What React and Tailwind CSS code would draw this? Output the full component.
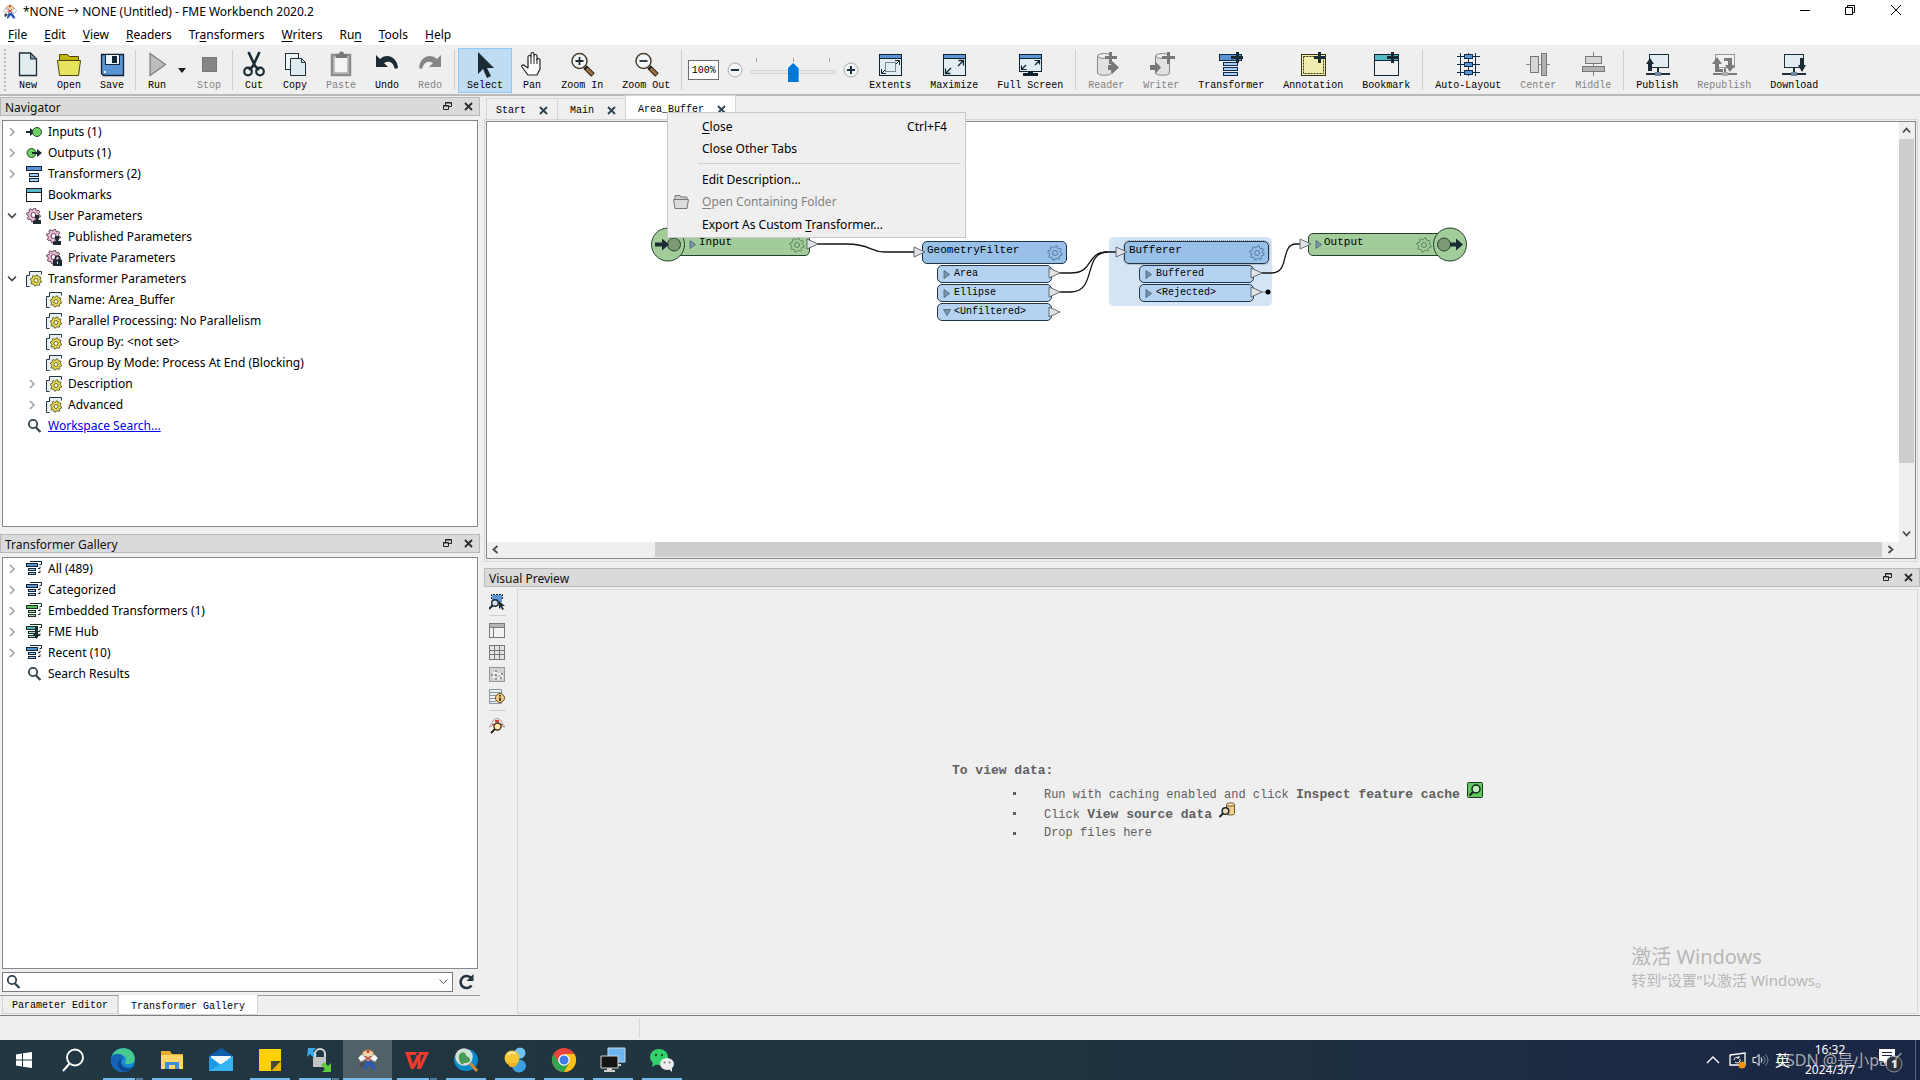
import React from "react";

const UI = 'font-["Noto_Sans","Noto_Sans_CJK_SC",sans-serif]';
const MONO = 'font-["Liberation_Mono",monospace]';

/* ---------- icons: toolbar (30 x 28) ---------- */

const Svg = ({ w = 30, h = 28, vb, children, className = "" }) => (
  <svg width={w} height={h} viewBox={vb || `0 0 ${w} ${h}`} fill="none" aria-hidden="true" className={"block shrink-0 " + className}>
    {children}
  </svg>
);

const Screen = ({ children }) => (
  <>
    <rect x="4.5" y="4.5" width="22" height="21" fill="#e3ecf0" stroke="#0d2430" />
    <rect x="5" y="5" width="21" height="3" fill="#5b94d4" />
    <path d="M4.5 8.5h22" stroke="#0d2430" />
    {children}
  </>
);

const icons = {
  New: (
    <Svg>
      <path d="M6.5 3h11l6 6v16.5h-17z" fill="#e3edf0" stroke="#1c3038" strokeWidth="1.3" />
      <path d="M17.5 3v6h6z" fill="#7d99a8" stroke="#1c3038" />
    </Svg>
  ),
  Open: (
    <Svg>
      <path d="M5.5 11V4.5h8l2 2h9V11" fill="#c2b60a" stroke="#4a4608" />
      <path d="M3.5 10.5h23l-2 15h-19z" fill="#e8e35e" stroke="#4a4608" />
    </Svg>
  ),
  Save: (
    <Svg>
      <path d="M4.5 4.5h22v21h-20l-2-2z" fill="#5b94d4" stroke="#0f2338" strokeWidth="1.3" />
      <rect x="8.5" y="4.5" width="14" height="10" fill="#eef3f6" stroke="#0f2338" />
      <rect x="15" y="6" width="5" height="7" fill="#0f2338" />
      <rect x="7" y="21" width="2" height="2" fill="#fff" />
    </Svg>
  ),
  Run: (
    <Svg>
      <path d="M8 3.5v22l15.5-11z" fill="#bcbcbc" stroke="#7e7e7e" strokeWidth="1.2" />
    </Svg>
  ),
  Stop: (
    <Svg>
      <rect x="8.5" y="7.5" width="14" height="14" fill="#868686" stroke="#777" />
    </Svg>
  ),
  Cut: (
    <Svg>
      <path d="M9.5 2l6.5 14 4 4M20.5 2L14 16l-4 4" stroke="#1c2b33" strokeWidth="2.6" />
      <circle cx="9" cy="21.5" r="3.8" stroke="#1c2b33" strokeWidth="2.2" />
      <circle cx="21" cy="21.5" r="3.8" stroke="#1c2b33" strokeWidth="2.2" />
    </Svg>
  ),
  Copy: (
    <Svg>
      <rect x="5.5" y="3.5" width="13" height="16" fill="#f2f5f6" stroke="#1c3038" />
      <path d="M10.5 8.5h11l4 4v13h-15z" fill="#dfebef" stroke="#1c3038" />
      <path d="M21.5 8.5v4h4" stroke="#1c3038" />
    </Svg>
  ),
  Paste: (
    <Svg>
      <rect x="6" y="5" width="18" height="20" fill="#f4f4f4" stroke="#8b8b8b" strokeWidth="2.5" />
      <rect x="8" y="7" width="14" height="16" stroke="#8b8b8b" />
      <path d="M10 4h3a2.5 2.5 0 0 1 5 0h3v4H10z" fill="#777" />
    </Svg>
  ),
  Undo: (
    <Svg>
      <path d="M4 5v12h12l-4-4c5-3 9-1 11 6l3-1C25 6 14 3 8 9z" fill="#1c2b33" />
    </Svg>
  ),
  Redo: (
    <Svg>
      <path d="M26 5v12H14l4-4c-5-3-9-1-11 6l-3-1C5 6 16 3 22 9z" fill="#868686" />
    </Svg>
  ),
  Select: (
    <Svg>
      <path d="M8 2v22l5-5 4 9 4-2-4-8h7z" fill="#1c2b33" />
    </Svg>
  ),
  Pan: (
    <Svg>
      <path
        d="M11 25l-6-8c-1-2 1-3 3-1l3 2V7c0-2 3-2 3 0V4c0-2 3-2 3 0v2c0-2 3-2 3 0v4c0-2 3-2 3 0v9l-3 6z"
        fill="#fff" stroke="#222" strokeWidth="1.2" strokeLinejoin="round" />
      <path d="M14 7v7M17 6v8M20 9v5" stroke="#222" />
    </Svg>
  ),
  "Zoom In": (
    <Svg>
      <path d="M18 17l8 8" stroke="#1d1d1d" strokeWidth="5" />
      <path d="M19.5 18.5l6 6" stroke="#a5713b" strokeWidth="3" />
      <circle cx="12.5" cy="11" r="7.5" fill="#f4f6f6" stroke="#4b3f35" strokeWidth="1.5" />
      <path d="M8.5 11h8M12.5 7v8" stroke="#1c2b33" strokeWidth="1.8" />
    </Svg>
  ),
  "Zoom Out": (
    <Svg>
      <path d="M18 17l8 8" stroke="#1d1d1d" strokeWidth="5" />
      <path d="M19.5 18.5l6 6" stroke="#a5713b" strokeWidth="3" />
      <circle cx="12.5" cy="11" r="7.5" fill="#f4f6f6" stroke="#4b3f35" strokeWidth="1.5" />
      <path d="M8.5 11h8" stroke="#1c2b33" strokeWidth="1.8" />
    </Svg>
  ),
  Extents: (
    <Svg>
      <Screen>
        <rect x="10.5" y="12.5" width="10" height="9" stroke="#0d2430" strokeDasharray="1 1" />
        <path d="M20 10.5h4.5V15M24 11l-3 3M6.5 19v4.5H11M7 23l3-3" stroke="#0d2430" />
      </Screen>
    </Svg>
  ),
  Maximize: (
    <Svg>
      <Screen>
        <path d="M19.5 10.5h5v5M24 11l-5 5M6.5 18.5v5h5M7 23l5-5" stroke="#0d2430" strokeWidth="1.3" />
      </Screen>
    </Svg>
  ),
  "Full Screen": (
    <Svg>
      <rect x="4.5" y="4.5" width="22" height="17" fill="#e3ecf0" stroke="#0d2430" />
      <rect x="5" y="5" width="21" height="3" fill="#5b94d4" />
      <path d="M4.5 8.5h22" stroke="#0d2430" />
      <path d="M19.5 10.5h5v4M24 11l-4 4M6.5 15.5v4h5M7 19l4-4" stroke="#0d2430" strokeWidth="1.2" />
      <path d="M13 22h5v1h5v3H8v-3h5z" fill="#0d2430" />
    </Svg>
  ),
  Reader: (
    <Svg>
      <path d="M6.5 6v17c0 3 14 3 14 0V6" fill="#e1e1e1" stroke="#858585" />
      <ellipse cx="13.5" cy="6" rx="7" ry="2.5" fill="#ededed" stroke="#858585" />
      <path d="M17 15h4v-4l7 6.5-7 6.5v-4h-4z" fill="#787878" />
      <path d="M18 2h3v4h5v3h-5v5h-3V9h-4V6h4z" fill="#787878" />
    </Svg>
  ),
  Writer: (
    <Svg>
      <path d="M9.5 6v17c0 3 14 3 14 0V6" fill="#e1e1e1" stroke="#858585" />
      <ellipse cx="16.5" cy="6" rx="7" ry="2.5" fill="#ededed" stroke="#858585" />
      <path d="M4 15h5v-4l6 6.5L9 24v-4H4z" fill="#787878" />
      <path d="M21 2h3v4h5v3h-5v5h-3V9h-5V6h5z" fill="#787878" />
    </Svg>
  ),
  Transformer: (
    <Svg>
      <rect x="3.5" y="4.5" width="22" height="6" fill="#5b94d4" stroke="#0f2c4a" />
      <rect x="7.5" y="12.5" width="14" height="3" fill="#a9cdf3" stroke="#0f2c4a" />
      <rect x="7.5" y="17.5" width="14" height="3" fill="#a9cdf3" stroke="#0f2c4a" />
      <rect x="7.5" y="22.5" width="14" height="3" fill="#a9cdf3" stroke="#0f2c4a" />
      <path d="M20 2h3v4h4v3h-4v4h-3V9h-5V6h5z" fill="#1a2a33" />
    </Svg>
  ),
  Annotation: (
    <Svg>
      <rect x="3.5" y="4.5" width="24" height="21" fill="#f1edaf" stroke="#37341a" />
      <rect x="5.5" y="6.5" width="20" height="17" stroke="#37341a" strokeDasharray="2 1" />
      <path d="M20 2h3v4h5v3h-5v4h-3V9h-4V6h4z" fill="#1a2a33" />
    </Svg>
  ),
  Bookmark: (
    <Svg>
      <rect x="3.5" y="4.5" width="24" height="21" fill="#f1f1f1" stroke="#123" />
      <rect x="4" y="5" width="23" height="5" fill="#55b9c5" />
      <path d="M3.5 10.5h24" stroke="#123" />
      <path d="M20 2h3v4h5v3h-5v4h-3V9h-4V6h4z" fill="#1a2a33" />
    </Svg>
  ),
  "Auto-Layout": (
    <Svg>
      <path d="M7.5 3v23M22.5 3v23M4 6.5h23M4 14.5h23M4 22.5h23M15.5 3v23" stroke="#0f2c4a" />
      <rect x="11.5" y="4.5" width="8" height="4" fill="#5b94d4" stroke="#0f2c4a" />
      <rect x="11.5" y="12.5" width="8" height="4" fill="#5b94d4" stroke="#0f2c4a" />
      <rect x="11.5" y="20.5" width="8" height="4" fill="#5b94d4" stroke="#0f2c4a" />
    </Svg>
  ),
  Center: (
    <Svg>
      <path d="M3 14.5h24" stroke="#858585" />
      <rect x="7.5" y="6.5" width="8" height="16" fill="#d6d6d6" stroke="#777" />
      <rect x="18.5" y="3.5" width="5" height="22" fill="#b1b1b1" stroke="#777" />
    </Svg>
  ),
  Middle: (
    <Svg>
      <path d="M15.5 2v24" stroke="#858585" />
      <rect x="7.5" y="6.5" width="16" height="7" fill="#d6d6d6" stroke="#777" />
      <rect x="4.5" y="16.5" width="22" height="5" fill="#b1b1b1" stroke="#777" />
    </Svg>
  ),
  Publish: (
    <Svg>
      <rect x="7.5" y="4.5" width="19" height="13" fill="#e3ecf0" stroke="#1c3038" />
      <path d="M16 18v5M4 24h24" stroke="#1c3038" strokeWidth="2" />
      <rect x="13" y="22" width="6" height="4" fill="#7089a0" />
      <path d="M4 14l4-6 4 6h-2v7H6v-7z" fill="#1c2b33" />
    </Svg>
  ),
  Republish: (
    <Svg>
      <rect x="6.5" y="4.5" width="19" height="13" fill="#efefef" stroke="#999" />
      <path d="M4 24h24M16 18v5" stroke="#7a7a7a" strokeWidth="2" />
      <rect x="13" y="22" width="6" height="4" fill="#aaa" />
      <path d="M3 14l5-7 5 7h-3v5h4v3H6v-8zM26 15l-5 7-5-7h3v-4h-4V8h8v7z" fill="#7a7a7a" />
    </Svg>
  ),
  Download: (
    <Svg>
      <rect x="5.5" y="4.5" width="19" height="13" fill="#e3ecf0" stroke="#1c3038" />
      <path d="M15 18v5M3 24h24" stroke="#1c3038" strokeWidth="2" />
      <rect x="12" y="22" width="6" height="4" fill="#7089a0" />
      <path d="M27 15l-4 7-4-7h2V8h4v7z" fill="#1c2b33" />
    </Svg>
  ),
};

/* ---------- icons: trees and side toolbar (16 x 16) ---------- */

const Gear = ({ cx, cy, r, fill, stroke, hole = "#fff", sw = 1 }) => {
  const pts = [];
  for (let i = 0; i < 32; i++) {
    const a = ((i + 0.5) / 32) * Math.PI * 2;
    const rad = i % 4 < 2 ? r : r * 0.76;
    pts.push(`${(cx + rad * Math.cos(a)).toFixed(2)},${(cy + rad * Math.sin(a)).toFixed(2)}`);
  }
  return (
    <>
      <polygon points={pts.join(" ")} fill={fill} stroke={stroke} strokeWidth={sw} strokeLinejoin="round" />
      <circle cx={cx} cy={cy} r={r * 0.35} fill={hole} stroke={stroke} strokeWidth={sw} />
    </>
  );
};

const S16 = ({ children }) => <Svg w={16} h={16}>{children}</Svg>;

const InputIcon = () => (
  <S16>
    <path d="M0 7h4V4l5 4-5 4V9H0z" fill="#1a2a33" />
    <circle cx="11" cy="8" r="4.5" fill="#6fd067" stroke="#24502b" />
  </S16>
);
const OutputIcon = () => (
  <S16>
    <circle cx="5.5" cy="8" r="4.5" fill="#6fd067" stroke="#24502b" />
    <path d="M6 7h5V4l5 4-5 4V9H6z" fill="#1a2a33" />
  </S16>
);
const TransformerIcon = () => (
  <S16>
    <rect x="0.5" y="0.5" width="15" height="4" fill="#5b94d4" stroke="#0f2338" />
    <rect x="3.5" y="7.5" width="9" height="3" fill="#a9cdf3" stroke="#0f2338" />
    <rect x="3.5" y="12.5" width="9" height="3" fill="#a9cdf3" stroke="#0f2338" />
  </S16>
);
const BookmarkIcon = () => (
  <S16>
    <rect x="0.5" y="1.5" width="15" height="13" fill="#fff" stroke="#1b1822" />
    <rect x="1" y="2" width="14" height="3" fill="#55b9c5" />
    <path d="M1 5.5h14" stroke="#1b1822" />
  </S16>
);
const UserParamIcon = () => (
  <S16>
    <Gear cx={7.5} cy={7} r={7} fill="#ecb8d3" stroke="#4a3341" sw={0.9} />
    <path d="M9 7h4v3l-1 2h3v4H7v-3l3-1-1-2z" fill="#1a2a33" />
  </S16>
);
const PrivateParamIcon = () => (
  <S16>
    <Gear cx={7.5} cy={7} r={7} fill="#ecb8d3" stroke="#4a3341" sw={0.9} />
    <path d="M9.5 10V8a2 2 0 0 1 4 0v2" stroke="#1a2a33" strokeWidth="1.5" />
    <rect x="7" y="9.5" width="9" height="6.5" fill="#1a2a33" />
    <rect x="11" y="11.5" width="1" height="2.5" fill="#dfe6ea" />
  </S16>
);
const ParamIcon = () => (
  <S16>
    <path d="M3.5 0.5h12v3M3.5 0.5v4h-3v11h3" fill="#e9eff2" stroke="#25363f" />
    <rect x="4" y="1" width="11" height="14" fill="#e9eff2" />
    <Gear cx={10} cy={9.5} r={5.7} fill="#e8dd4f" stroke="#5b571b" sw={0.9} />
  </S16>
);
const SearchIcon = ({ className = "" }) => (
  <Svg w={16} h={16} className={className}>
    <circle cx="7" cy="6" r="4.2" stroke="#30424c" strokeWidth="1.8" />
    <path d="M10 9.5l4.5 4.5" stroke="#30424c" strokeWidth="2.2" />
  </Svg>
);
const GalleryIcon = ({ top = "#5b94d4", sub = "#a9cdf3", line = "#0f2338", hub = false }) => (
  <S16>
    <path d="M4 .5h11.5v3h-2M14 5.5v2h-2M14 9.5v2h-2" stroke={line} />
    <rect x="0.5" y="2.5" width="11" height="3" fill={top} stroke={line} />
    <rect x="2.5" y="7.5" width="7" height="2" fill={sub} stroke={line} />
    <rect x="2.5" y="11.5" width="7" height="2" fill={sub} stroke={line} />
    {hub && <path d="M9 3h3v7h2l-3.5 5L7 10h2z" fill="#1a2a33" />}
  </S16>
);

/* ---------- title bar, menu bar, toolbar ---------- */

const Mascot = () => (
  <>
    <path d="M6 7c0-7 12-7 12 0l-2 1H8z" fill="#f0d5a0" stroke="#8a6a3a" strokeWidth="0.8" />
    <circle cx="12" cy="3.5" r="1.6" fill="#d93a2e" />
    <path d="M8 7h8v4l-4 2-4-2z" fill="#f3e3d2" />
    <path d="M2 10l4-4 4 5-5 3zM22 10l-4-4-4 5 5 3z" fill="#f7f7f7" stroke="#8a8a8a" strokeWidth="0.8" />
    <path d="M9 8l6 5M15 8l-6 5" stroke="#c9442f" strokeWidth="1.5" />
    <path d="M10 13h5l3 4 2 4-3 1-4-5-4 5-2-1z" fill="#2a5bb5" />
    <path d="M3 17l3-3 3 2-4 4z" fill="#4b4b4b" />
  </>
);

const TitleBar = () => (
  <header className="flex h-6 items-center bg-white text-[12px] text-black">
    <Svg w={16} h={16} vb="0 0 24 24" className="ml-[2px]">
      <Mascot />
    </Svg>
    <h1 className="ml-[5px] flex-1 font-normal">*NONE → NONE (Untitled) - FME Workbench 2020.2</h1>
    <div className="flex h-full">
      <button aria-label="Minimize" className="flex w-[45px] items-center justify-center pb-1">
        <Svg w={10} h={10}><path d="M0 5.5h10" stroke="#000" /></Svg>
      </button>
      <button aria-label="Restore" className="flex w-[45px] items-center justify-center pb-1">
        <Svg w={10} h={10}><path d="M.5 2.5h7v7h-7zM2.5 2V.5h7v7H8" stroke="#000" /></Svg>
      </button>
      <button aria-label="Close window" className="flex w-12 items-center justify-center pb-1">
        <Svg w={10} h={10}><path d="M0 0l10 10M10 0L0 10" stroke="#000" /></Svg>
      </button>
    </div>
  </header>
);

const menus = [
  ["", "F", "ile"], ["", "E", "dit"], ["", "V", "iew"], ["", "R", "eaders"], ["Tr", "a", "nsformers"],
  ["", "W", "riters"], ["Ru", "n", ""], ["", "T", "ools"], ["", "H", "elp"],
];

const Mnemonic = ({ parts }) => (
  <>{parts[0]}<span className="underline underline-offset-2">{parts[1]}</span>{parts[2]}</>
);

const MenuBar = () => (
  <nav className="flex h-[22px] items-center gap-px border-b border-[#efefef] bg-white text-[12px] text-black">
    {menus.map((m) => (
      <button key={m.join("")} className="px-2 leading-5"><Mnemonic parts={m} /></button>
    ))}
  </nav>
);

const Tool = ({ name, off = false, active = false }) => (
  <button
    disabled={off}
    className={
      "flex h-[45px] flex-col items-center border px-2 pt-[1px] " +
      (active ? "border-[#90c8f6] bg-[#c0dcf3] " : "border-transparent ") +
      (off ? "text-[#838383]" : "text-black")
    }
  >
    <span className="-mx-2 flex">{icons[name]}</span>
    <span className="min-w-5 whitespace-nowrap text-center text-[10px] leading-[15px]">{name}</span>
  </button>
);

const Sep = ({ tight }) => <span className={"h-10 w-px shrink-0 bg-[#cfcfcf] " + (tight ? "mx-px" : "mx-[2px]")} />;

const Tick = () => <span className="h-1 w-px bg-[#a9a391]" />;

const ToolBar = () => (
  <div className={"flex h-[50px] items-center gap-px border-b-2 border-[#b9b9b9] bg-[#efefef] pl-1 " + MONO}>
    <span className="mr-[2px] h-[42px] w-0 border-l-2 border-dotted border-[#bdbdbd]" />
    <Tool name="New" /><Tool name="Open" /><Tool name="Save" />
    <Sep tight />
    <Tool name="Run" />
    <button aria-label="Run options" className="flex h-[45px] w-[10px] items-center justify-center">
      <Svg w={8} h={5}><path d="M0 0h8L4 5z" fill="#1d1d1d" /></Svg>
    </button>
    <Tool name="Stop" off />
    <Sep tight />
    <Tool name="Cut" /><Tool name="Copy" /><Tool name="Paste" off /><Tool name="Undo" /><Tool name="Redo" off />
    <Sep />
    <Tool name="Select" active /><Tool name="Pan" /><Tool name="Zoom In" /><Tool name="Zoom Out" />
    <Sep tight />
    <input aria-label="Zoom level" defaultValue="100%" className="ml-1 h-5 w-[31px] border border-[#6e6e6e] bg-white text-center text-[10px] text-black" />
    <button aria-label="Decrease zoom" className="ml-[7px]">
      <Svg w={16} h={16}><circle cx="8" cy="8" r="7" stroke="#a7adb0" fill="#f4f6f6" /><path d="M4 8h8" stroke="#1c3543" strokeWidth="2" /></Svg>
    </button>
    <span className="ml-[7px] flex w-[84px] flex-col">
      <span className="flex justify-between px-[5px]">
        <Tick /><Tick /><Tick />
      </span>
      <input
        type="range" aria-label="Zoom" defaultValue="50"
        className="h-5 w-full appearance-none bg-transparent [&::-webkit-slider-runnable-track]:h-1 [&::-webkit-slider-runnable-track]:border [&::-webkit-slider-runnable-track]:border-[#d2d6d6] [&::-webkit-slider-runnable-track]:bg-[#e7eaea] [&::-webkit-slider-thumb]:-mt-2 [&::-webkit-slider-thumb]:h-[19px] [&::-webkit-slider-thumb]:w-[11px] [&::-webkit-slider-thumb]:appearance-none [&::-webkit-slider-thumb]:bg-[#0078d7] [&::-webkit-slider-thumb]:[clip-path:polygon(50%_0,100%_28%,100%_100%,0_100%,0_28%)]"
      />
    </span>
    <button aria-label="Increase zoom" className="ml-[7px]">
      <Svg w={16} h={16}><circle cx="8" cy="8" r="7" stroke="#a7adb0" fill="#f4f6f6" /><path d="M4 8h8M8 4v8" stroke="#1c3543" strokeWidth="2" /></Svg>
    </button>
    <Tool name="Extents" /><Tool name="Maximize" /><Tool name="Full Screen" />
    <Sep />
    <Tool name="Reader" off /><Tool name="Writer" off /><Tool name="Transformer" /><Tool name="Annotation" /><Tool name="Bookmark" />
    <Sep />
    <Tool name="Auto-Layout" /><Tool name="Center" off /><Tool name="Middle" off />
    <Sep />
    <Tool name="Publish" /><Tool name="Republish" off /><Tool name="Download" />
  </div>
);

/* ---------- docks ---------- */

const DockHeader = ({ title }) => (
  <div className="flex h-[19px] shrink-0 items-center border border-[#b8b8b8] bg-[#dadada] pl-1 pr-[6px] text-[12px] text-[#111]">
    <h2 className="flex-1 pt-[3px] leading-4">{title}</h2>
    <button aria-label={"Float " + title} className="mr-3">
      <Svg w={9} h={9}><path d="M.5 3.5h5v4h-5zM2.5 3V.5h6v4H6M0 4h6M2 1h6" stroke="#222" /></Svg>
    </button>
    <button aria-label={"Close " + title}>
      <Svg w={9} h={9}><path d="M1 1l7 7M8 1L1 8" stroke="#2b2b2b" strokeWidth="1.8" /></Svg>
    </button>
  </div>
);

const Arrow = ({ open }) => (
  <Svg w={10} h={10}>
    {open ? <path d="M1 2.5l4 4 4-4" stroke="#404040" strokeWidth="1.6" /> : <path d="M3 1l4 4-4 4" stroke="#a3a3a3" strokeWidth="1.6" />}
  </Svg>
);

const Row = ({ icon, text, arrow, child = false, link = false }) => (
  <li className={"flex h-[21px] items-center " + (child ? "pl-[24px]" : "pl-1")}>
    {arrow ? (
      <button aria-label={(arrow === "open" ? "Collapse " : "Expand ") + text}><Arrow open={arrow === "open"} /></button>
    ) : (
      <span className="w-[10px]" />
    )}
    <span className="ml-[9px] mr-[6px]">{icon}</span>
    {link ? <a href="#search" className="text-[#0000ee] underline">{text}</a> : <span>{text}</span>}
  </li>
);

const Navigator = () => (
  <section className="flex min-h-0 flex-[430_1_0px] flex-col">
    <DockHeader title="Navigator" />
    <ul className="mx-[2px] mt-1 flex-1 overflow-hidden border border-[#828790] bg-white text-[12px] text-black">
      <Row arrow="shut" icon={<InputIcon />} text="Inputs (1)" />
      <Row arrow="shut" icon={<OutputIcon />} text="Outputs (1)" />
      <Row arrow="shut" icon={<TransformerIcon />} text="Transformers (2)" />
      <Row icon={<BookmarkIcon />} text="Bookmarks" />
      <Row arrow="open" icon={<UserParamIcon />} text="User Parameters" />
      <Row child icon={<UserParamIcon />} text="Published Parameters" />
      <Row child icon={<PrivateParamIcon />} text="Private Parameters" />
      <Row arrow="open" icon={<ParamIcon />} text="Transformer Parameters" />
      <Row child icon={<ParamIcon />} text="Name: Area_Buffer" />
      <Row child icon={<ParamIcon />} text="Parallel Processing: No Parallelism" />
      <Row child icon={<ParamIcon />} text="Group By: <not set>" />
      <Row child icon={<ParamIcon />} text="Group By Mode: Process At End (Blocking)" />
      <Row child arrow="shut" icon={<ParamIcon />} text="Description" />
      <Row child arrow="shut" icon={<ParamIcon />} text="Advanced" />
      <Row link icon={<SearchIcon />} text="Workspace Search..." />
    </ul>
  </section>
);

const Gallery = () => (
  <section className="mt-[7px] flex min-h-0 flex-[481_1_0px] flex-col">
    <DockHeader title="Transformer Gallery" />
    <ul className="mx-[2px] mt-1 flex-1 overflow-hidden border border-[#828790] bg-white text-[12px] text-black">
      <Row arrow="shut" icon={<GalleryIcon />} text="All (489)" />
      <Row arrow="shut" icon={<GalleryIcon />} text="Categorized" />
      <Row arrow="shut" icon={<GalleryIcon top="#55c05a" sub="#a8dcae" line="#173324" />} text="Embedded Transformers (1)" />
      <Row arrow="shut" icon={<GalleryIcon top="#55b9c5" sub="#a8dcc8" line="#173324" hub />} text="FME Hub" />
      <Row arrow="shut" icon={<GalleryIcon />} text="Recent (10)" />
      <Row icon={<SearchIcon />} text="Search Results" />
    </ul>
    <div className="ml-[2px] mt-[3px] flex h-5 items-center">
      <label className="flex h-5 flex-1 items-center border border-[#7a7a7a] bg-white pl-[2px] pr-1">
        <SearchIcon />
        <input aria-label="Search transformers" className="h-4 min-w-0 flex-1 text-[12px] outline-none" />
        <Svg w={9} h={6}><path d="M.5.5l4 4 4-4" stroke="#555" /></Svg>
      </label>
      <button aria-label="Refresh" className="ml-[4px] mr-[5px]">
        <Svg w={18} h={18}>
          <path d="M14.5 12.5a6 6 0 1 1-1-8" stroke="#22333c" strokeWidth="2.6" />
          <path d="M16.5 1v7h-7z" fill="#22333c" />
        </Svg>
      </button>
    </div>
    <div className={"mt-[3px] flex h-5 items-start border-t border-[#999] pl-[2px] text-[10px] text-black " + MONO}>
      <button className="h-[18px] border border-t-0 border-[#d4d4d4] px-[9px] pt-px">Parameter Editor</button>
      <button className="-mt-px h-5 border border-t-0 border-[#d4d4d4] bg-white px-[12px] pt-[3px]">Transformer Gallery</button>
    </div>
  </section>
);

/* ---------- workspace canvas ---------- */

const Tri = ({ down }) => (
  <Svg w={8} h={9}>
    {down ? <path d="M.5 1.5h7l-3.5 6z" fill="#7c97a8" stroke="#41607a" strokeWidth="0.8" /> : <path d="M1 .5l5.5 4L1 8.5z" fill="#7c97a8" stroke="#41607a" strokeWidth="0.8" />}
  </Svg>
);

const NodeGear = ({ fill, stroke }) => (
  <Svg w={16} h={16}><Gear cx={8} cy={8} r={7.2} fill={fill} stroke={stroke} hole={fill} sw={0.9} /></Svg>
);

const Node = ({ left, title, ports, dashed }) => (
  <div className="absolute top-[119px] flex flex-col" style={{ left }}>
    <div className={"flex h-[23px] w-[145px] items-center rounded-[5px] border border-[#22364a] bg-[#98c0e9] pl-1 pr-[3px] " + (dashed ? "outline-1 outline-dotted outline-[#9a9a9a]" : "")}>
      <span className="flex-1 pb-1 text-[11px]">{title}</span>
      <NodeGear fill="#98c0e9" stroke="#4a6f93" />
    </div>
    {ports.map((p) => (
      <div key={p} className="ml-[15px] mt-px flex h-[18px] w-[115px] items-center rounded-[5px] border border-[#22364a] bg-[#b5d3f1] pl-[5px] text-[10px]">
        <Tri down={p === "<Unfiltered>"} />
        <span className="ml-[3px] pb-[2px]">{p}</span>
      </div>
    ))}
  </div>
);

const Port = ({ x, y }) => (
  <path d={`M${x} ${y - 5}l11 5-11 5z`} fill="#dfe3e5" stroke="#566069" strokeWidth="0.9" />
);

const wire = { stroke: "#151515", strokeWidth: 1.3, fill: "none" };

const Canvas = () => (
  <div className="relative min-h-0 min-w-0 flex-1 overflow-hidden bg-white text-black">
    <div className="absolute left-[622px] top-[115px] h-[69px] w-[163px] rounded-[5px] bg-[#d3e4f6]" />
    <svg className="absolute left-0 top-0" width="1000" height="240" aria-hidden="true">
      <path d="M330 122h30c24 0 22 8 38 8h29" {...wire} />
      <path d="M573 151h10c26 0 14-21 38-21h8" {...wire} />
      <path d="M573 170h10c28 0 12-40 38-40" {...wire} />
      <path d="M775 151h10c18 0 8-29 24-29h4" {...wire} />
      <path d="M775 170h5" stroke="#888" />
      <circle cx="781" cy="170" r="2.5" fill="#000" />
    </svg>
    <div className="absolute left-[181px] top-[111px] flex h-[23px] w-[142px] items-center rounded-[5px] border border-[#24402a] bg-[#a2cd9b] pl-5 pr-1">
      <Tri />
      <span className="ml-[2px] flex-1 pb-1 text-[11px]">Input</span>
      <NodeGear fill="#a2cd9b" stroke="#4f7a58" />
    </div>
    <Node left="435px" title="GeometryFilter" ports={["Area", "Ellipse", "<Unfiltered>"]} />
    <Node left="637px" title="Bufferer" ports={["Buffered", "<Rejected>"]} dashed />
    <div className="absolute left-[821px] top-[111px] flex h-[23px] w-[142px] items-center rounded-[5px] border border-[#24402a] bg-[#a2cd9b] pl-[6px] pr-[17px]">
      <Tri />
      <span className="ml-px flex-1 pb-1 text-[11px]">Output</span>
      <NodeGear fill="#a2cd9b" stroke="#4f7a58" />
    </div>
    <svg className="absolute left-0 top-0" width="1000" height="240" aria-hidden="true">
      <circle cx="181" cy="122.5" r="16.5" fill="#a2cd9b" stroke="#24402a" />
      <circle cx="187" cy="122.5" r="6.5" fill="#7c9a74" stroke="#24402a" />
      <path d="M168 120.5h7v-4l7 6-7 6v-4h-7z" fill="#1a2a33" />
      <circle cx="963" cy="122.5" r="16.5" fill="#a2cd9b" stroke="#24402a" />
      <circle cx="957" cy="122.5" r="6.5" fill="#7c9a74" stroke="#24402a" />
      <path d="M963 120.5h6v-4l7 6-7 6v-4h-6z" fill="#1a2a33" />
      <Port x={320} y={122} /><Port x={427} y={130} />
      <Port x={562} y={151} /><Port x={562} y={170} /><Port x={562} y={190} />
      <Port x={629} y={130} /><Port x={764} y={151} /><Port x={764} y={170} /><Port x={813} y={122} />
    </svg>
  </div>
);

const Chevron = ({ d }) => (
  <Svg w={9} h={9}><path d={d} stroke="#4a4a4a" strokeWidth="1.8" /></Svg>
);

const Tab = ({ name, active, first }) => (
  <div
    className={
      "flex items-center border border-b-0 border-[#d6d6d6] pr-[9px] text-black " +
      (first ? "pl-[9px] " : "pl-3 ") +
      (active ? "h-6 bg-white pt-[3px]" : "-mr-px h-[21px] bg-[#efefef] pt-[2px]")
    }
  >
    <button className="mr-[13px] text-[10px]">{name}</button>
    <button aria-label={"Close tab " + name}>
      <Svg w={9} h={9}><path d="M1 1l7 7M8 1L1 8" stroke="#2f444f" strokeWidth="1.9" /></Svg>
    </button>
  </div>
);

const MenuItem = ({ parts, shortcut, icon, off }) => (
  <button role="menuitem" disabled={off} className={"flex h-[22px] w-full items-center pr-[18px] " + (off ? "text-[#838383]" : "text-black")}>
    <span className="ml-[5px] mr-3 w-[17px]">{icon}</span>
    <span className="flex-1 text-left"><Mnemonic parts={parts} /></span>
    {shortcut && <span>{shortcut}</span>}
  </button>
);

const ContextMenu = () => (
  <div role="menu" className="absolute left-[183px] top-[15px] z-10 w-[299px] border border-[#c8c8c8] bg-[#efefef] pb-px pt-[3px] text-[12px]">
    <MenuItem parts={["", "C", "lose"]} shortcut="Ctrl+F4" />
    <MenuItem parts={["Close Other Tabs", "", ""]} />
    <div className="mb-[5px] ml-[30px] mr-1 mt-[3px] h-px bg-[#d2d2d2]" />
    <MenuItem parts={["Edit Description...", "", ""]} />
    <div className="mb-px">
      <MenuItem
        off parts={["", "O", "pen Containing Folder"]}
        icon={<S16><path d="M2 5V1.5h5l1 1.5h6V6" stroke="#777" fill="#ccc" /><path d="M.5 5.5h15l-1.5 9H2z" fill="#dcdcdc" stroke="#777" /></S16>}
      />
    </div>
    <MenuItem parts={["Export As Custom ", "T", "ransformer..."]} />
  </div>
);

const Workspace = () => (
  <section className="relative mr-[2px] flex min-h-0 flex-[464_1_0px] flex-col">
    <div className={"flex h-[22px] shrink-0 items-end pl-[2px] " + MONO}>
      <Tab name="Start" first /><Tab name="Main" /><Tab name="Area_Buffer" active />
    </div>
    <div className="flex min-h-0 flex-1 flex-col border border-[#d6d6d6] p-px pb-[2px]">
      <div className="flex min-h-0 flex-1 flex-col border border-[#828790]">
        <div className="flex min-h-0 flex-1">
          <div className={"flex min-w-0 flex-1 " + MONO}><Canvas /></div>
          <div className="flex w-4 flex-col items-start bg-[#efefef]">
            <button aria-label="Scroll up" className="flex h-[17px] w-[15px] items-center justify-center"><Chevron d="M1 6.5l3.5-4 3.5 4" /></button>
            <div className="w-[15px] flex-[322] bg-[#cdcdcd]" />
            <div className="flex-[62]" />
            <button aria-label="Scroll down" className="flex h-[17px] w-[15px] items-center justify-center"><Chevron d="M1 2.5l3.5 4 3.5-4" /></button>
          </div>
        </div>
        <div className="flex h-4 items-start bg-[#efefef] pr-4">
          <button aria-label="Scroll left" className="flex h-[15px] w-[17px] items-center justify-center"><Chevron d="M6.5 1l-4 3.5 4 3.5" /></button>
          <div className="flex-[151]" />
          <div className="h-[15px] flex-[1226] bg-[#cdcdcd]" />
          <button aria-label="Scroll right" className="flex h-[15px] w-[17px] items-center justify-center"><Chevron d="M2.5 1l4 3.5-4 3.5" /></button>
        </div>
      </div>
    </div>
    <ContextMenu />
  </section>
);

/* ---------- visual preview ---------- */

const previewTools = [
  ["Inspect selected", (
    <S16 key="a">
      <rect x="3" y="1" width="10" height="7" fill="#5b94d4" />
      <path d="M2.5 5V.5h11V6" stroke="#1a2a33" strokeDasharray="2 1" />
      <circle cx="6" cy="9" r="3.3" stroke="#1a2a33" strokeWidth="1.4" fill="#cfe0f0" />
      <path d="M4 11l-4 4" stroke="#1a2a33" strokeWidth="2" />
      <path d="M10 7l6 5h-3l2 3-2 1-1-3-2 2z" fill="#1a2a33" />
    </S16>
  )],
  null,
  ["Display control", (
    <S16 key="b">
      <rect x=".5" y=".5" width="15" height="14" fill="#f3f3f3" stroke="#777" />
      <path d="M1 1h14v3H1z" fill="#b5b5b5" /><path d="M1 4.5h14M4.5 5v9" stroke="#777" />
    </S16>
  )],
  ["Table view", (
    <S16 key="c">
      <rect x=".5" y=".5" width="15" height="14" fill="#e4e4e4" stroke="#777" />
      <path d="M5.5 1v13M10.5 1v13M1 5.5h14M1 9.5h14" stroke="#777" />
    </S16>
  )],
  ["Graphics view", (
    <S16 key="d">
      <rect x=".5" y=".5" width="15" height="14" fill="#d2d2d2" stroke="#969696" />
      <path d="M3 8l4-4v3h6M3 8l4 4 6-1V7" stroke="#fafafa" strokeWidth="1.5" />
      <path d="M2 8h2M7 3v2M12 7h2M7 11v2M11 11h2M6 8h2" stroke="#777" strokeWidth="1.5" />
    </S16>
  )],
  ["Feature information", (
    <S16 key="e">
      <path d="M.5.5h12v14H.5zM1 3.5h11M1 6.5h6M1 9.5h5M1 12.5h6" fill="#e9eff2" stroke="#8a979d" />
      <circle cx="11" cy="9" r="4.5" fill="#f3cf86" stroke="#6b5126" />
      <path d="M11 6v1.5M11 8.5V12" stroke="#2b2112" strokeWidth="1.6" />
    </S16>
  )],
  null,
  ["Open in inspector", (
    <S16 key="f">
      <path d="M3 5c1-6 9-6 10 0l3 4-3-1-2-2H6L3 8 0 9z" fill="#ede6e0" stroke="#a88f86" strokeWidth="0.8" />
      <path d="M6 2h4v2H6zM3 6h3v1H3zM11 6h3v1h-3z" fill="#d93a2e" />
      <circle cx="8.5" cy="8.5" r="3.5" stroke="#3a2b1b" strokeWidth="1.3" fill="#ffe9a8" />
      <path d="M6 11l-4 4" stroke="#2a1f14" strokeWidth="1.8" />
    </S16>
  )],
];

const InspectIcon = () => (
  <svg width="16" height="16" fill="none" aria-hidden="true" className="mb-1 inline-block align-text-bottom">
    <rect x=".5" y=".5" width="15" height="15" rx="1" fill="#62c860" stroke="#1c3a24" />
    <circle cx="9" cy="7" r="4" stroke="#13251c" strokeWidth="1.5" fill="#bfe8bb" />
    <path d="M6 10l-3.5 3.5" stroke="#13251c" strokeWidth="2" />
  </svg>
);
const SourceIcon = () => (
  <svg width="16" height="16" fill="none" aria-hidden="true" className="mb-1 inline-block align-text-bottom">
    <path d="M7.5 2.5v9c0 2 8 2 8 0v-9" fill="#f5cf8e" stroke="#70542a" />
    <ellipse cx="11.5" cy="2.5" rx="4" ry="1.7" fill="#fbe2b2" stroke="#70542a" />
    <circle cx="6.5" cy="9" r="3.3" stroke="#1a2a33" strokeWidth="1.5" fill="#f0dcb2" />
    <path d="M4 11.5L.5 15" stroke="#1a2a33" strokeWidth="2" />
  </svg>
);

const Preview = () => (
  <section className="mt-[6px] flex min-h-0 flex-[446_1_0px] flex-col">
    <DockHeader title="Visual Preview" />
    <div className="flex min-h-0 flex-1">
      <div className="flex w-[33px] flex-col items-start pl-[5px] pt-[7px]">
        {previewTools.map((t, i) =>
          t ? (
            <button key={i} aria-label={t[0]} className="mb-[6px]">{t[1]}</button>
          ) : (
            <span key={i} className="mb-[7px] -mt-px h-px w-[17px] bg-[#cfcfcf]" />
          )
        )}
      </div>
      <div className={"mb-px mr-[2px] mt-[2px] flex flex-1 items-center justify-center border border-[#d9d9d9] pt-[3px] text-[12px] text-[#606060] " + MONO}>
        <div className="flex flex-col">
          <p className="mb-1 text-[13px] font-bold leading-4">To view data:</p>
          <ul className="pl-[61px]">
            {[
              <>Run with caching enabled and click <b className="text-[13px]">Inspect feature cache</b> <InspectIcon /></>,
              <>Click <b className="text-[13px]">View source data</b> <SourceIcon /></>,
              <>Drop files here</>,
            ].map((c, i) => (
              <li key={i} className="flex h-5 items-center whitespace-pre">
                <span className="mr-[28px] h-[3px] w-[3px] bg-[#606060]" />
                <span>{c}</span>
              </li>
            ))}
          </ul>
        </div>
      </div>
    </div>
  </section>
);

/* ---------- Windows taskbar ---------- */

const T = ({ children }) => <Svg w={26} h={26}>{children}</Svg>;

const taskApps = [
  ["Start", "", <T key="0"><path d="M4 7.5l6-1v6H4zM11 6.3l9-1.3v7.5h-9zM4 13.5h6v6l-6-1zM11 13.5h9V21l-9-1.3z" fill="#fff" /></T>],
  ["Search", "", <T key="1"><circle cx="14" cy="10.5" r="8" stroke="#fff" strokeWidth="1.8" /><path d="M8.5 16.5L2 24" stroke="#fff" strokeWidth="2" /></T>],
  ["Edge", "multi", (
    <T key="2">
      <circle cx="13" cy="13" r="12" fill="#1689d6" />
      <path d="M2 9C5 0 20-2 24 8c2 6-1 9-6 9-3 0-4-1-2-4 1-4-8-9-14-4z" fill="#46c98e" />
      <path d="M2 9c6-4 11-1 12 2-5-1-8 4-5 9 2 3 6 5 9 4C8 28-2 20 2 9z" fill="#1564b5" />
      <path d="M14 11c-4 1-4 6 0 9 3 2 7 1 9-1-3 7-11 7-14 2-3-4-1-10 5-10z" fill="#0b4a8f" />
    </T>
  )],
  ["File Explorer", "one", (
    <T key="3">
      <path d="M2 4h9l2 3h11v6H2z" fill="#e9a935" /><path d="M2 8h22v14H2z" fill="#ffd667" />
      <path d="M6 22v-7h14v7h-4v-4h-6v4z" fill="#3b8fd8" />
    </T>
  )],
  ["Mail", "", (
    <T key="4">
      <path d="M1 9l12-8 12 8v14H1z" fill="#0f5fae" /><path d="M3 9h20v9H3z" fill="#f3f8fc" />
      <path d="M1 9l12 9L25 9v15H1z" fill="#1f9be6" /><path d="M1 24l14-8 10-7v15z" fill="#35b4f3" />
    </T>
  )],
  ["Sticky Notes", "one", (
    <T key="5"><path d="M2 2h22v13l-9 9H2z" fill="#fdd008" /><path d="M24 14l-9 10h9z" fill="#f0b400" /><path d="M14 24V14h10z" fill="#4b4738" /></T>
  )],
  ["Secure link", "multi", (
    <T key="6">
      <path d="M2 1h8L7 4l4 4-3 3-4-4-3 3z" fill="#39a9e8" />
      <path d="M9 10V7a5 5 0 0 1 10 0v3" stroke="#d9d9d9" strokeWidth="2" /><rect x="7" y="10" width="13" height="10" rx="1" fill="#c4c4c4" />
      <path d="M25 25h-9l3-3-4-4 3-3 4 4 3-3z" fill="#5fcb36" />
    </T>
  )],
  ["FME Workbench", "active", <Svg key="7" w={24} h={24}><Mascot /></Svg>],
  ["WPS Office", "multi", (
    <T key="8">
      <path d="M1 5h12l-1 3H6l3 9 4-9h4l-1 8 6-11h3l-8 17h-4l1-8-4 8H7z" fill="#ef3a2c" />
      <path d="M14 5h11l-2 3h-8z" fill="#ef3a2c" />
    </T>
  )],
  ["Image search", "one", (
    <T key="9">
      <ellipse cx="13" cy="13" rx="12" ry="11" fill="#0b8cc9" /><circle cx="11" cy="10" r="8" fill="#cfe3d2" stroke="#d8dde0" strokeWidth="1.5" />
      <path d="M6 8c3-4 6-3 7 0s4 1 4 5-6 2-7 4-5-3-4-9z" fill="#4b9a55" /><path d="M17 16l7 8" stroke="#c98a3a" strokeWidth="3" />
    </T>
  )],
  ["Contacts", "one", (
    <T key="10">
      <circle cx="18" cy="6" r="5.5" fill="#6ec3f0" /><ellipse cx="17" cy="19" rx="7" ry="6.5" fill="#3b9ee0" />
      <circle cx="10" cy="11" r="7.5" fill="#f9c733" /><path d="M5 16h11l-3 4H8z" fill="#f3b21e" /><path d="M6 8c2-3 6-3 7-1" stroke="#fdeaa8" strokeWidth="2" />
    </T>
  )],
  ["Chrome", "one", (
    <T key="11">
      <circle cx="13" cy="13" r="12" fill="#e8453c" />
      <path d="M2.6 7A12 12 0 0 0 13 25l5.2-9H7.8z" fill="#32a350" /><path d="M13 25a12 12 0 0 0 10.4-18H13l5.2 9z" fill="#fbc116" />
      <circle cx="13" cy="13" r="5.8" fill="#fff" /><circle cx="13" cy="13" r="4.5" fill="#3f7ee8" />
    </T>
  )],
  ["Remote desktop", "one", (
    <T key="12">
      <path d="M8 1h17v14H8z" fill="#6db6ef" stroke="#c7dced" /><path d="M1 9h17v12H1z" fill="#141414" stroke="#d0d0d0" />
      <path d="M7 21h5v2h3v2H4v-2h3z" fill="#cfcfcf" /><path d="M18 17h3v2h-3z" fill="#ccc" />
    </T>
  )],
  ["WeChat", "one", (
    <T key="13">
      <ellipse cx="10" cy="10" rx="9" ry="8" fill="#33d06c" /><path d="M4 15l-1 5 5-3z" fill="#33d06c" />
      <circle cx="7" cy="8" r="1.2" fill="#14532b" /><circle cx="13" cy="8" r="1.2" fill="#14532b" />
      <ellipse cx="18" cy="17" rx="7" ry="6" fill="#ececec" /><path d="M20 22l3 3v-4z" fill="#ececec" />
      <circle cx="15.5" cy="15.5" r="1" fill="#777" /><circle cx="20.5" cy="15.5" r="1" fill="#777" />
    </T>
  )],
];

const Taskbar = () => (
  <footer className="relative flex h-10 shrink-0 bg-linear-to-r from-[#213741] via-[#20343f] to-[#1a2645] text-white">
    {taskApps.map(([name, state, icon]) => (
      <button key={name} aria-label={name} className={"flex w-[49px] flex-col items-center " + (state === "active" ? "bg-[#506168]" : "")}>
        <span className="flex flex-1 items-center pt-px">{icon}</span>
        <span className={"flex h-[2px] " + (state === "active" ? "w-[49px] " : "w-10 ") + (state ? "bg-[#76b9ed]" : "")}>
          {state === "multi" && <span className="ml-auto w-2 border-l border-[#20343f] bg-[#4f7a9b]" />}
        </span>
      </button>
    ))}
    <div className="ml-auto flex items-center">
      <button aria-label="Show hidden icons" className="mr-[9px]"><Svg w={14} h={8}><path d="M1 7l6-6 6 6" stroke="#fff" strokeWidth="1.4" /></Svg></button>
      <Svg w={17} h={17}>
        <path d="M1 3l15-2v12H1z" stroke="#fff" strokeWidth="1.3" /><path d="M5 8a3 3 0 0 1 5-2M11 7a3 3 0 0 1-5 3M10 4v2H8" stroke="#fff" />
        <circle cx="13" cy="13" r="3.5" fill="#f7930d" />
      </Svg>
      <Svg w={17} h={14} className="ml-[6px]">
        <path d="M1 4.5h3l3-3v11l-3-3H1z" stroke="#fff" /><path d="M9 4.5q2 2.5 0 5" stroke="#fff" /><path d="M11 3q4 4 0 8M13.5 1.5q5 5.5 0 11" stroke="#78889a" />
      </Svg>
      <span className="ml-[6px] text-[15px] leading-5">英</span>
      <time className="ml-[14px] w-[52px] whitespace-nowrap text-center text-[12px] leading-5">16:32<br />2024/3/7</time>
      <button aria-label="Notifications" className="ml-[22px] mr-[11px]">
        <Svg w={26} h={26}>
          <path d="M1 2h16v12h-8l-3 3v-3H1z" fill="#fff" /><path d="M4 5.5h10M4 8.5h10" stroke="#1a2645" />
          <circle cx="16" cy="17" r="8" fill="#2d3138" stroke="#8a8f98" />
          <text x="13" y="21" fontSize="11" fontWeight="bold" fill="#fff">1</text>
        </Svg>
      </button>
      <span className="mr-1 h-full w-px bg-[#5b6678]" />
    </div>
    <span className="pointer-events-none absolute right-4 top-2 whitespace-nowrap text-[16px] leading-6 text-white/60">CSDN @是小pa丫</span>
  </footer>
);

export default function App() {
  return (
    <div className={"relative flex h-screen flex-col overflow-hidden bg-[#efefef] " + UI}>
      <TitleBar />
      <MenuBar />
      <ToolBar />
      <main className="flex min-h-0 flex-1 pt-px">
        <div className="flex w-1/4 flex-col"><Navigator /><Gallery /></div>
        <div className="ml-1 flex min-w-0 flex-1 flex-col"><Workspace /><Preview /></div>
      </main>
      <div className="flex h-[25px] shrink-0 border-t border-[#7f7f7f] py-[2px]">
        <span className="w-1/3 border-r border-[#d6d6d6]" />
      </div>
      <Taskbar />
      <div className="pointer-events-none absolute bottom-[90px] right-[90px] text-[#b7b7b7]">
        <p className="text-[20px] leading-6">激活 Windows</p>
        <p className="pt-px text-[15px] leading-5">转到“设置”以激活 Windows。</p>
      </div>
    </div>
  );
}
